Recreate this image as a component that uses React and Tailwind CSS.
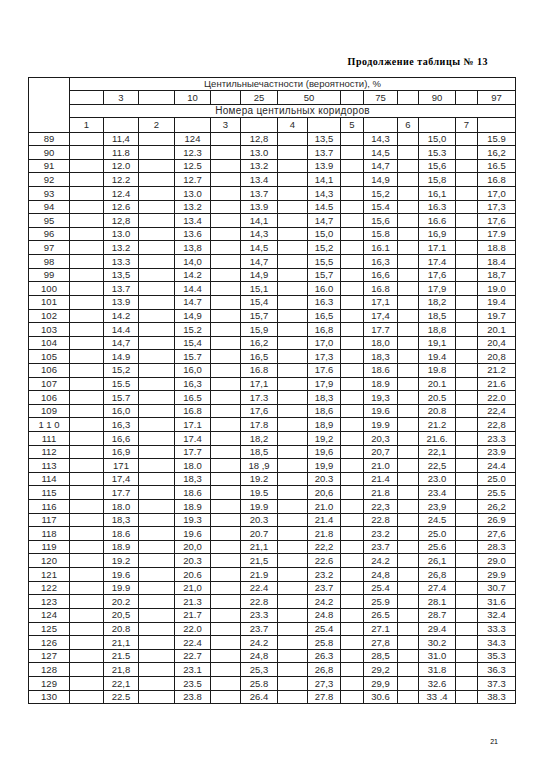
import React from 'react'

const cols = [41, 34, 35, 36, 36, 30, 37, 30, 33, 23, 34, 21, 37, 22, 38]

const rows = [
  ['89', '11,4', '124', '12,8', '13,5', '14,3', '15,0', '15.9'],
  ['90', '11.8', '12.3', '13.0', '13.7', '14,5', '15.3', '16,2'],
  ['91', '12.0', '12.5', '13.2', '13.9', '14,7', '15,6', '16.5'],
  ['92', '12.2', '12.7', '13.4', '14,1', '14,9', '15,8', '16.8'],
  ['93', '12.4', '13.0', '13.7', '14,3', '15,2', '16,1', '17,0'],
  ['94', '12.6', '13.2', '13.9', '14.5', '15.4', '16.3', '17,3'],
  ['95', '12,8', '13.4', '14,1', '14,7', '15,6', '16.6', '17,6'],
  ['96', '13.0', '13.6', '14,3', '15,0', '15.8', '16,9', '17.9'],
  ['97', '13.2', '13,8', '14,5', '15,2', '16.1', '17.1', '18.8'],
  ['98', '13.3', '14,0', '14,7', '15,5', '16,3', '17.4', '18.4'],
  ['99', '13,5', '14.2', '14,9', '15,7', '16,6', '17,6', '18,7'],
  ['100', '13.7', '14.4', '15,1', '16.0', '16.8', '17,9', '19.0'],
  ['101', '13.9', '14.7', '15,4', '16.3', '17,1', '18,2', '19.4'],
  ['102', '14.2', '14,9', '15,7', '16,5', '17,4', '18,5', '19.7'],
  ['103', '14.4', '15.2', '15,9', '16,8', '17.7', '18,8', '20.1'],
  ['104', '14,7', '15,4', '16,2', '17,0', '18,0', '19,1', '20,4'],
  ['105', '14.9', '15.7', '16,5', '17,3', '18,3', '19.4', '20,8'],
  ['106', '15,2', '16,0', '16.8', '17.6', '18.6', '19.8', '21.2'],
  ['107', '15.5', '16,3', '17,1', '17,9', '18.9', '20.1', '21.6'],
  ['106', '15.7', '16.5', '17.3', '18,3', '19,3', '20.5', '22.0'],
  ['109', '16,0', '16.8', '17,6', '18,6', '19.6', '20.8', '22,4'],
  ['1 1 0', '16,3', '17.1', '17.8', '18,9', '19.9', '21.2', '22,8'],
  ['111', '16,6', '17.4', '18,2', '19,2', '20,3', '21.6.', '23.3'],
  ['112', '16,9', '17.7', '18,5', '19,6', '20,7', '22,1', '23.9'],
  ['113', '171', '18.0', '18 ,9', '19,9', '21.0', '22,5', '24.4'],
  ['114', '17,4', '18,3', '19.2', '20.3', '21.4', '23.0', '25.0'],
  ['115', '17.7', '18.6', '19.5', '20,6', '21.8', '23.4', '25.5'],
  ['116', '18.0', '18.9', '19.9', '21.0', '22,3', '23,9', '26,2'],
  ['117', '18,3', '19.3', '20.3', '21.4', '22.8', '24.5', '26.9'],
  ['118', '18.6', '19.6', '20.7', '21.8', '23.2', '25.0', '27,6'],
  ['119', '18.9', '20,0', '21,1', '22,2', '23.7', '25.6', '28.3'],
  ['120', '19.2', '20.3', '21,5', '22.6', '24.2', '26,1', '29.0'],
  ['121', '19.6', '20.6', '21.9', '23.2', '24,8', '26,8', '29.9'],
  ['122', '19.9', '21,0', '22.4', '23.7', '25.4', '27.4', '30.7'],
  ['123', '20.2', '21.3', '22.8', '24.2', '25.9', '28.1', '31.6'],
  ['124', '20,5', '21.7', '23.3', '24.8', '26.5', '28.7', '32.4'],
  ['125', '20.8', '22.0', '23.7', '25.4', '27.1', '29.4', '33.3'],
  ['126', '21,1', '22.4', '24.2', '25.8', '27,8', '30.2', '34.3'],
  ['127', '21.5', '22.7', '24,8', '26.3', '28,5', '31.0', '35.3'],
  ['128', '21,8', '23.1', '25,3', '26,8', '29,2', '31.8', '36.3'],
  ['129', '22,1', '23.5', '25.8', '27,3', '29,9', '32.6', '37.3'],
  ['130', '22.5', '23.8', '26.4', '27.8', '30.6', '33 .4', '38.3'],
]

const cell = 'border border-[#1a1a1a] p-0 text-center align-middle leading-none whitespace-nowrap'

export default function App() {
  return (
    <div className="w-[540px] h-[780px] bg-white text-[#2a2a2a] font-['Liberation_Sans',Arial,sans-serif] overflow-hidden">
      <div className="flex justify-end pr-[52px] pt-[57px] h-[77px]">
        <p className="font-['Liberation_Serif','Times_New_Roman',serif] font-bold text-[10px] tracking-[0.5px] text-black leading-none">
          Продолжение таблицы № 13
        </p>
      </div>

      <div className="pl-[28px]">
        <table className="table-fixed border-collapse text-[9.5px] w-[487px]">
          <colgroup>
            {cols.map((w, i) => (
              <col key={i} style={{ width: w }} />
            ))}
          </colgroup>
          <tbody>
            <tr className="h-[12.6px]">
              <td rowSpan={4} className={cell}></td>
              <td colSpan={14} className={cell}>Центильныечастности (вероятности), %</td>
            </tr>
            <tr className="h-[14.4px]">
              <td className={cell}></td>
              <td className={cell}>3</td>
              <td className={cell}></td>
              <td className={cell}>10</td>
              <td className={cell}></td>
              <td className={cell}>25</td>
              <td colSpan={2} className={cell}>50</td>
              <td className={cell}></td>
              <td className={cell}>75</td>
              <td className={cell}></td>
              <td className={cell}>90</td>
              <td className={cell}></td>
              <td className={cell}>97</td>
            </tr>
            <tr className="h-[13.3px]">
              <td colSpan={14} className={`${cell} text-[10px] tracking-[0.3px]`}>Номера центильных коридоров</td>
            </tr>
            <tr className="h-[14.3px]">
              {['1', '', '2', '', '3', '', '4', '', '5', '', '6', '', '7', ''].map((t, i) => (
                <td key={i} className={cell}>{t}</td>
              ))}
            </tr>
            {rows.map((r, i) => (
              <tr key={i} className="h-[13.62px]">
                <td className={cell}>{r[0]}</td>
                <td className={cell}></td>
                <td className={cell}>{r[1]}</td>
                <td className={cell}></td>
                <td className={cell}>{r[2]}</td>
                <td className={cell}></td>
                <td className={cell}>{r[3]}</td>
                <td className={cell}></td>
                <td className={cell}>{r[4]}</td>
                <td className={cell}></td>
                <td className={cell}>{r[5]}</td>
                <td className={cell}></td>
                <td className={cell}>{r[6]}</td>
                <td className={cell}></td>
                <td className={cell}>{r[7]}</td>
              </tr>
            ))}
          </tbody>
        </table>
      </div>

      <div className="flex justify-end pr-[42px] pt-[34px]">
        <span className="text-[7px] text-black leading-none">21</span>
      </div>
    </div>
  )
}
